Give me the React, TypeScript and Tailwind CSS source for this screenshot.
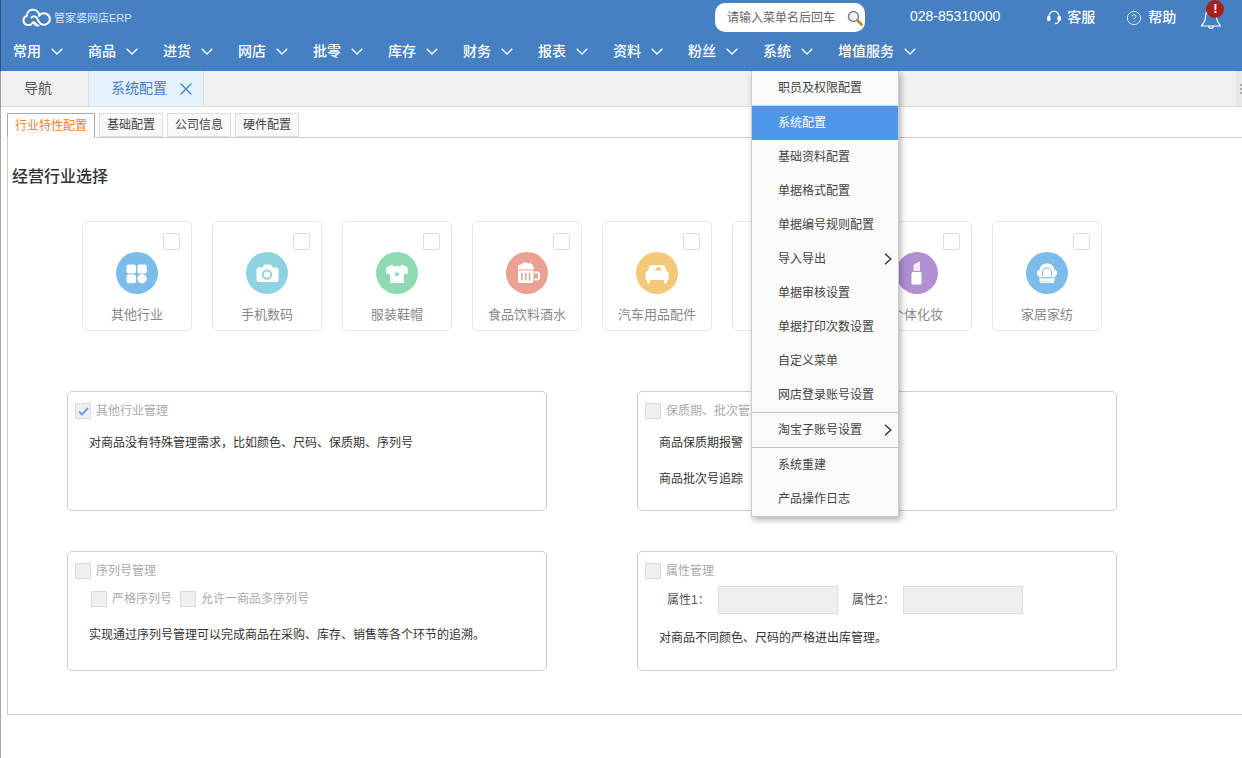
import React from 'react';
import { CircleHelp, X } from 'lucide-react';

const navItems = ['常用', '商品', '进货', '网店', '批零', '库存', '财务', '报表', '资料', '粉丝', '系统'];

const menuItems = [
  { label: '职员及权限配置', divider: true },
  { label: '系统配置', active: true },
  { label: '基础资料配置' },
  { label: '单据格式配置' },
  { label: '单据编号规则配置' },
  { label: '导入导出', arrow: true },
  { label: '单据审核设置' },
  { label: '单据打印次数设置' },
  { label: '自定义菜单' },
  { label: '网店登录账号设置', divider: true, strong: true },
  { label: '淘宝子账号设置', arrow: true, divider: true, strong: true },
  { label: '系统重建' },
  { label: '产品操作日志' },
];

function GridIcon() {
  return (
    <>
      <rect x="10.6" y="12.6" width="9.4" height="9" rx="1.8" fill="#fff" />
      <rect x="21.4" y="12.6" width="9.4" height="9" rx="1.8" fill="#fff" />
      <rect x="10.6" y="22.6" width="9.4" height="8.6" rx="1.8" fill="#fff" />
      <circle cx="26" cy="26.8" r="4.7" fill="#fff" />
    </>
  );
}

function CameraIcon() {
  return (
    <>
      <path d="M12.5 15.5h4l1.6-3h6.8l1.6 3h4a2 2 0 0 1 2 2V28a2 2 0 0 1-2 2h-18a2 2 0 0 1-2-2V17.500a2 2 0 0 1 2-2z" fill="#fff" />
      <circle cx="21" cy="22.600" r="4.200" fill="none" stroke="#8dd3e0" strokeWidth="2" />
    </>
  );
}

function ShirtIcon() {
  return (
    <>
      <path d="M16 12.500l-5.500 2.800-.5 6.200 4.200.8V31h13.600v-8.700l4.200-.8-.5-6.200-5.500-2.800-2 1.800h-6z" fill="#fff" />
      <path d="M21 19l.9 1.900 2.100.3-1.500 1.400.4 2-1.900-1-1.900 1 .4-2-1.500-1.400 2.100-.3z" fill="#90dab3" />
    </>
  );
}

function BeerIcon() {
  return (
    <>
      <path d="M12 15.500a3.200 3.200 0 0 1 3.500-3 4 4 0 0 1 6.500-1 3.500 3.500 0 0 1 5 2.500 2.600 2.600 0 0 1 .5 3.500H12z" fill="#fff" />
      <path d="M12 18.600h15.500V29a2 2 0 0 1-2 2H14a2 2 0 0 1-2-2z" fill="#fff" />
      <path d="M28.500 20.500h3a1.500 1.500 0 0 1 1.500 1.500v4a1.500 1.500 0 0 1-1.500 1.500h-3" fill="none" stroke="#fff" strokeWidth="1.800" />
      <path d="M16 21v7.500M19.800 21v7.500M23.600 21v7.500" stroke="#eba094" strokeWidth="1.500" />
    </>
  );
}

function CarIcon() {
  return (
    <>
      <path d="M15.500 13h11a2.500 2.500 0 0 1 2.300 1.600l1.500 4.200 1.300.7a2 2 0 0 1 1 1.700V27a1 1 0 0 1-1 1h-.7v2a1.500 1.500 0 0 1-3 0v-2H14.100v2a1.500 1.500 0 0 1-3 0v-2h-.6a1 1 0 0 1-1-1v-5.800a2 2 0 0 1 1-1.700l1.300-.7 1.500-4.200a2.500 2.500 0 0 1 2.200-1.600z" fill="#fff" />
      <path d="M19 18.500c.5-2.300 1.500-3.300 3-3.300h2.500l1 3.300z" fill="#f3c979" />
    </>
  );
}

function BlankIcon() {
  return <circle cx="21" cy="21" r="9" fill="#fff" />;
}

function LipstickIcon() {
  return (
    <>
      <path d="M17.500 19v-6.200l5.800-3.300c.5 0 .7.300.7.700V19z" fill="#fff" opacity="0.85" />
      <rect x="15.500" y="20" width="10" height="12.500" rx="1.500" fill="#fff" />
    </>
  );
}

function ChairIcon() {
  return (
    <>
      <path d="M21 11.500c-4.300 0-7.200 2.700-7.200 6.200a3.300 3.300 0 0 0-3 3.400c0 1.800 1.200 3 2.700 3.400v4.500h15v-4.500c1.500-.4 2.700-1.600 2.700-3.400a3.300 3.300 0 0 0-3-3.400c0-3.500-2.900-6.200-7.200-6.200z" fill="#fff" />
      <path d="M16.500 24v-3.500a4.500 4.500 0 0 1 9 0V24" fill="none" stroke="#7bbcea" strokeWidth="1.100" />
      <path d="M14.500 25.800h13" stroke="#7bbcea" strokeWidth="1.200" />
      <rect x="14" y="29.400" width="14" height="1.600" fill="#fff" />
    </>
  );
}

const industries = [
  { label: '其他行业', color: 'bg-[#7bbcea]', icon: <GridIcon /> },
  { label: '手机数码', color: 'bg-[#8dd3e0]', icon: <CameraIcon /> },
  { label: '服装鞋帽', color: 'bg-[#90dab3]', icon: <ShirtIcon /> },
  { label: '食品饮料酒水', color: 'bg-[#eba094]', icon: <BeerIcon /> },
  { label: '汽车用品配件', color: 'bg-[#f3c979]', icon: <CarIcon /> },
  { label: '母婴用品', color: 'bg-[#f0a8c0]', icon: <BlankIcon /> },
  { label: '个体化妆', color: 'bg-[#b08fd3]', icon: <LipstickIcon /> },
  { label: '家居家纺', color: 'bg-[#7bbcea]', icon: <ChairIcon /> },
];

function Logo() {
  return (
    <svg width="30" height="19" viewBox="0 0 30 19" fill="none" stroke="#fff" strokeWidth="2" strokeLinecap="round" strokeLinejoin="round">
      <path d="M8.500 17H5.800a4.600 4.600 0 0 1-1-9A6.300 6.300 0 0 1 17 5.800" />
      <path d="M16.500 17.500c-2.500.3-4.500-1-4.800-3.500M11.700 14l-2.200 1.800M11.700 14l2.200 1.800" />
      <path d="M9.500 9.500c1.500-1.500 3.500-1.500 5 0 1.200 1.500 1.500 3 2.500 4.500 2 3 6 3.500 8.500 1.500a5.600 5.600 0 0 0-2-10c-2.500-.6-5 .3-6.500 2.500" />
    </svg>
  );
}

function SearchGlass() {
  return (
    <svg width="16" height="16" viewBox="0 0 16 16" fill="none">
      <circle cx="6.500" cy="6.500" r="5" fill="#eef2f3" stroke="#7d8488" strokeWidth="1.500" />
      <path d="M10.500 10.500l4 4" stroke="#a8913a" strokeWidth="2.600" strokeLinecap="round" />
    </svg>
  );
}

function Headset() {
  return (
    <svg width="14" height="15" viewBox="0 0 14 15" fill="none" stroke="#fff" strokeWidth="1.300">
      <path d="M2.200 8V6a4.800 4.800 0 0 1 9.600 0v2" />
      <rect x="0.700" y="6.500" width="2.200" height="4" rx="1" fill="#fff" />
      <rect x="11.100" y="6.500" width="2.200" height="4" rx="1" fill="#fff" />
      <path d="M11.800 10.500c0 2-1.500 3-4 3" />
    </svg>
  );
}

function Bell() {
  return (
    <svg width="22" height="22" viewBox="0 0 22 22" fill="none" stroke="#fff" strokeWidth="1.200" strokeLinejoin="round">
      <path d="M11 1.500c-3.500 0-5.500 2.500-5.500 6 0 4-1.500 6.500-4 9.500h19c-2.500-3-4-5.500-4-9.500 0-3.500-2-6-5.500-6z" />
      <path d="M8.500 17.500a2.600 2.600 0 0 0 5 0" />
    </svg>
  );
}

function NavChevron() {
  return (
    <svg width="12" height="7" viewBox="0 0 12 7" fill="none" stroke="#fff" strokeWidth="1.300">
      <path d="M.7.7 6 6 11.300.7" />
    </svg>
  );
}

function RightArrow() {
  return (
    <svg width="8" height="12" viewBox="0 0 8 12" fill="none" stroke="#333" strokeWidth="1.400">
      <path d="M1 .8 6.800 6 1 11.200" />
    </svg>
  );
}

function SmallBox({ checked }: { checked?: boolean }) {
  return (
    <span className="w-4 h-4 shrink-0 flex items-center justify-center bg-[#efefef] border border-[#d9d9d9]">
      {checked && (
        <svg width="11" height="9" viewBox="0 0 11 9" fill="none" stroke="#6f9ef0" strokeWidth="2">
          <path d="M1 4.500 4 7.500 10 1" />
        </svg>
      )}
    </span>
  );
}

function PanelTitle({ checked, title }: { checked?: boolean; title: string }) {
  return (
    <div className="flex items-center gap-[5px] h-4">
      <SmallBox checked={checked} />
      <span className="text-[#aaa]">{title}</span>
    </div>
  );
}

function Panel({ children }: { children: React.ReactNode }) {
  return <div className="w-[480px] h-[120px] rounded-[5px] border border-[#ccc] pt-[11px] pl-[7px]">{children}</div>;
}

function SystemMenu() {
  return (
    <div className="absolute left-[-12px] top-full z-10 w-[148px] bg-[#fafafa] border-x border-b border-[#ccc] shadow-[2px_3px_6px_rgba(0,0,0,0.3)] text-[12px] font-normal text-[#444]">
      {menuItems.map((m) => (
        <div key={m.label} className={m.divider ? (m.strong ? 'border-b border-[#c4c4c4]' : 'border-b border-[#d4d4d4]') : ''}>
          <div className={`h-[34px] pl-[26px] pr-[6px] flex items-center justify-between ${m.active ? 'bg-[#4f96ea] text-white' : ''}`}>
            <span>{m.label}</span>
            {m.arrow && <RightArrow />}
          </div>
        </div>
      ))}
    </div>
  );
}

export default function App() {
  return (
    <div className="relative min-h-[758px] bg-white overflow-hidden font-['Liberation_Sans','Noto_Sans_CJK_SC',sans-serif] text-[12px] text-[#333]">
      <header className="h-[71px] bg-[#4480c2] text-white">
        <div className="h-[35px] flex items-center">
          <div className="w-[715px] shrink-0 pl-[22px] flex items-center gap-[2px]">
            <Logo />
            <span className="mt-[1px] text-[11px] text-[#d5e3f2]">管家婆网店ERP</span>
          </div>
          <div className="w-[150px] h-[29px] bg-white rounded-[10px] flex items-center pl-[12px] pr-[2px] justify-between text-[#666]">
            <span>请输入菜单名后回车</span>
            <SearchGlass />
          </div>
          <span className="ml-[45px] mb-[2px] text-[14px] font-medium">028-85310000</span>
          <div className="ml-[47px] flex items-center gap-[6px] text-[14px] font-medium">
            <Headset />
            <span>客服</span>
          </div>
          <div className="ml-[31px] flex items-center gap-[6px] text-[14px] font-medium">
            <CircleHelp className="w-4 h-4" strokeWidth={1.200} />
            <span>帮助</span>
          </div>
          <div className="relative ml-[24px] mt-[4px]">
            <Bell />
            <span className="absolute left-[6px] top-[-9px] w-[18px] h-[18px] rounded-full bg-[#a8201a] flex items-center justify-center font-bold text-[13px] leading-none">!</span>
          </div>
        </div>
        <nav className="h-[36px] pl-[13px] flex items-center text-[14px] font-medium">
          {navItems.map((n) => (
            <div key={n} className="relative w-[75px] h-full pb-[3px] flex items-center gap-[10px]">
              <span>{n}</span>
              <NavChevron />
              {n === '系统' && <SystemMenu />}
            </div>
          ))}
          <div className="h-full pb-[3px] flex items-center gap-[10px]">
            <span>增值服务</span>
            <NavChevron />
          </div>
        </nav>
      </header>

      <div className="h-[36px] bg-[#f0f0f0] border-b border-[#ddd] flex text-[14px]">
        <div className="w-[89px] pl-[24px] flex items-center border-r border-[#ddd] text-[#555]">导航</div>
        <div className="w-[115px] pl-[22px] flex items-center gap-[9px] bg-[#e3f2fd] border-r border-[#ddd] text-[#4480c2]">
          <span>系统配置</span>
          <X className="w-5 h-5 text-[#3b82d0]" strokeWidth={1.500} />
        </div>
        <div className="ml-auto w-[6px] bg-[#e8e8e8] flex flex-col items-end justify-center gap-[2px]">
          <span className="w-[2px] h-[2px] bg-[#aaa]" />
          <span className="w-[2px] h-[2px] bg-[#aaa]" />
          <span className="w-[2px] h-[2px] bg-[#aaa]" />
        </div>
      </div>

      <div className="pt-[6px] pl-[7px] flex gap-[4px] h-[30px]">
        <div className="w-[88px] h-[25px] flex items-center justify-center bg-white border border-[#aaa] border-b-white text-[#e8852f] relative z-[1]">行业特性配置</div>
        {['基础配置', '公司信息', '硬件配置'].map((t) => (
          <div key={t} className="w-[64px] h-[24px] flex items-center justify-center bg-[#f8f8f8] border border-[#ddd] text-[#444]">{t}</div>
        ))}
      </div>

      <main className="ml-[7px] h-[578px] border-l border-y border-[#ccc]">
        <h2 className="mt-[27px] pl-[4px] h-[24px] leading-[24px] text-[16px] font-medium text-[#333]">经营行业选择</h2>

        <div className="mt-[32px] ml-[74px] flex gap-[20px]">
          {industries.map((it) => (
            <div key={it.label} className="relative w-[110px] h-[110px] shrink-0 rounded-[5px] border border-[#e8e8e8] flex flex-col items-center pt-[30px]">
              <span className="absolute top-[11px] right-[11px] w-[17px] h-[17px] rounded-[2px] border border-[#ddd]" />
              <span className={`w-[42px] h-[42px] rounded-full ${it.color}`}>
                <svg width="42" height="42" viewBox="0 0 42 42">{it.icon}</svg>
              </span>
              <span className="mt-[11px] text-[13px] text-[#888]">{it.label}</span>
            </div>
          ))}
        </div>

        <div className="mt-[60px] ml-[59px] grid grid-cols-[480px_480px] gap-x-[90px] gap-y-[40px]">
          <Panel>
            <PanelTitle checked title="其他行业管理" />
            <p className="mt-[15px] ml-[14px]">对商品没有特殊管理需求，比如颜色、尺码、保质期、序列号</p>
          </Panel>
          <Panel>
            <PanelTitle title="保质期、批次管理" />
            <p className="mt-[15px] ml-[14px]">商品保质期报警</p>
            <p className="mt-[18px] ml-[14px]">商品批次号追踪</p>
          </Panel>
          <Panel>
            <PanelTitle title="序列号管理" />
            <div className="mt-[11px] ml-[16px] flex items-center gap-[5px] text-[#aaa]">
              <SmallBox />
              <span>严格序列号</span>
              <span className="ml-[3px]"><SmallBox /></span>
              <span>允许一商品多序列号</span>
            </div>
            <p className="mt-[18px] ml-[14px]">实现通过序列号管理可以完成商品在采购、库存、销售等各个环节的追溯。</p>
          </Panel>
          <Panel>
            <PanelTitle title="属性管理" />
            <div className="mt-[7px] ml-[22px] flex items-center">
              <span className="w-[51px] text-[#555]">属性1：</span>
              <span className="w-[120px] h-[28px] bg-[#efefef] border border-[#ddd]" />
              <span className="ml-[14px] w-[51px] text-[#555]">属性2：</span>
              <span className="w-[120px] h-[28px] bg-[#efefef] border border-[#ddd]" />
            </div>
            <p className="mt-[15px] ml-[14px]">对商品不同颜色、尺码的严格进出库管理。</p>
          </Panel>
        </div>
      </main>

      {/* window edge line */}
      <div className="absolute left-0 top-0 bottom-0 w-px bg-black/35" />
    </div>
  );
}
